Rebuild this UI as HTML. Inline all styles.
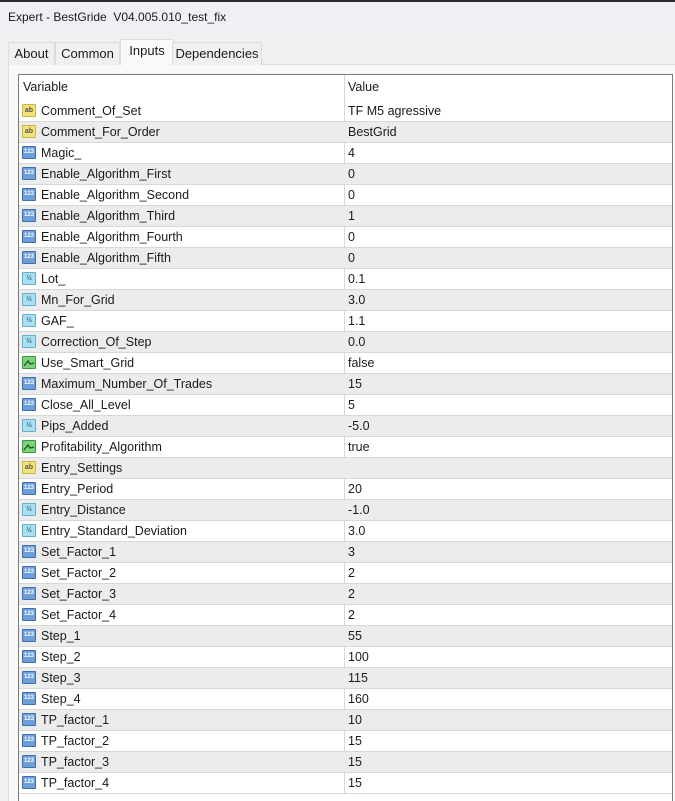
<!DOCTYPE html><html><head><style>
body{margin:0;width:675px;height:800px;overflow:hidden;background:#f0f0f0;font-family:"Liberation Sans","Noto Sans CJK SC",sans-serif;font-size:12.5px;color:#1a1a1a;position:relative}
.top{position:absolute;left:0;top:0;width:675px;height:2px;background:#2b2b2b}
.title{position:absolute;left:0;top:2px;width:675px;height:30px;background:#eff0f5}
.title span{position:absolute;left:8px;top:8px;font-size:12px}
.tabs{position:absolute;left:8px;top:42px;height:22px}
.tab{position:absolute;top:0;height:22px;line-height:22px;text-align:center;border:1px solid #dcdcdc;border-bottom:none;background:#f0f0f0;font-size:13px}
.tab.sel{top:-3px;height:25px;line-height:21px;background:#f9f9f9}
.panel{position:absolute;left:8px;top:64px;width:667px;height:736px;background:#f9f9f9;border-top:1px solid #dcdcdc;border-left:1px solid #dcdcdc}
.tbl{position:absolute;left:18px;top:74px;width:653px;height:726px;background:#fff;border:1px solid #7a7a7a;border-bottom:none}
.row{position:absolute;left:0;width:653px;height:20px;border-bottom:1px solid #d8d8d8}
.g{background:#ececec}
.v{position:absolute;left:4px;top:3px}
.n{position:absolute;left:22px;top:3px}
.val{position:absolute;left:329px;top:3px}
.div{position:absolute;left:325px;top:0;width:1px;height:718px;background:#d8d8d8}
.ic{position:absolute;left:3px;top:3px;width:14px;height:13px;border-radius:1px;font-size:7px;line-height:13px;text-align:center;font-weight:bold;overflow:hidden}
.ab{background:#f2e27a;border:1px solid #c9b441;width:12px;height:11px;line-height:11px;color:#555}
.n1{background:#6e9fd8;border:1px solid #3e6fae;width:12px;height:11px;line-height:11px;color:#fff;font-size:6px}
.fr{background:#a9dff0;border:1px solid #5fb2cf;width:12px;height:11px;line-height:11px;color:#2a6f8a}
.bo{background:#7ed37c;border:1px solid #3a9a3a;width:12px;height:11px}
</style></head><body>
<div class="top"></div>
<div class="title"><span>Expert - BestGride&nbsp; V04.005.010_test_fix</span></div>
<div class="panel"></div>
<div class="tabs">
<div class="tab" style="left:0;width:45px">About</div>
<div class="tab" style="left:47px;width:63px">Common</div>
<div class="tab sel" style="left:112px;width:52px">Inputs</div>
<div class="tab" style="left:164px;width:88px">Dependencies</div>
</div>
<div class="tbl">
<div class="div"></div>
<div class="row" style="top:2px;border-bottom:none"><span class="v">Variable</span><span class="val">Value</span></div>
<div id="rows"></div>
</div>
<script>
var d=[["ab","Comment_Of_Set","TF M5 agressive"],["ab","Comment_For_Order","BestGrid"],["n","Magic_","4"],["n","Enable_Algorithm_First","0"],["n","Enable_Algorithm_Second","0"],["n","Enable_Algorithm_Third","1"],["n","Enable_Algorithm_Fourth","0"],["n","Enable_Algorithm_Fifth","0"],["f","Lot_","0.1"],["f","Mn_For_Grid","3.0"],["f","GAF_","1.1"],["f","Correction_Of_Step","0.0"],["b","Use_Smart_Grid","false"],["n","Maximum_Number_Of_Trades","15"],["n","Close_All_Level","5"],["f","Pips_Added","-5.0"],["b","Profitability_Algorithm","true"],["ab","Entry_Settings",""],["n","Entry_Period","20"],["f","Entry_Distance","-1.0"],["f","Entry_Standard_Deviation","3.0"],["n","Set_Factor_1","3"],["n","Set_Factor_2","2"],["n","Set_Factor_3","2"],["n","Set_Factor_4","2"],["n","Step_1","55"],["n","Step_2","100"],["n","Step_3","115"],["n","Step_4","160"],["n","TP_factor_1","10"],["n","TP_factor_2","15"],["n","TP_factor_3","15"],["n","TP_factor_4","15"]];
var h="";d.forEach(function(r,i){var c={ab:'ab">ab',n:'n1">123',f:'fr">½',b:'bo"><svg width="12" height="11"><path d="M1 9 L5 4 L7 7 L11 6" stroke="#1d5a1d" fill="none" stroke-width="1.3"/></svg>'}[r[0]];
h+='<div class="row'+(i%2?' g':'')+'" style="top:'+(26+i*21)+'px"><div class="ic '+c+'</div><span class="n">'+r[1]+'</span><span class="val">'+r[2]+'</span></div>';});
document.getElementById('rows').outerHTML=h;
</script>
</body></html>
